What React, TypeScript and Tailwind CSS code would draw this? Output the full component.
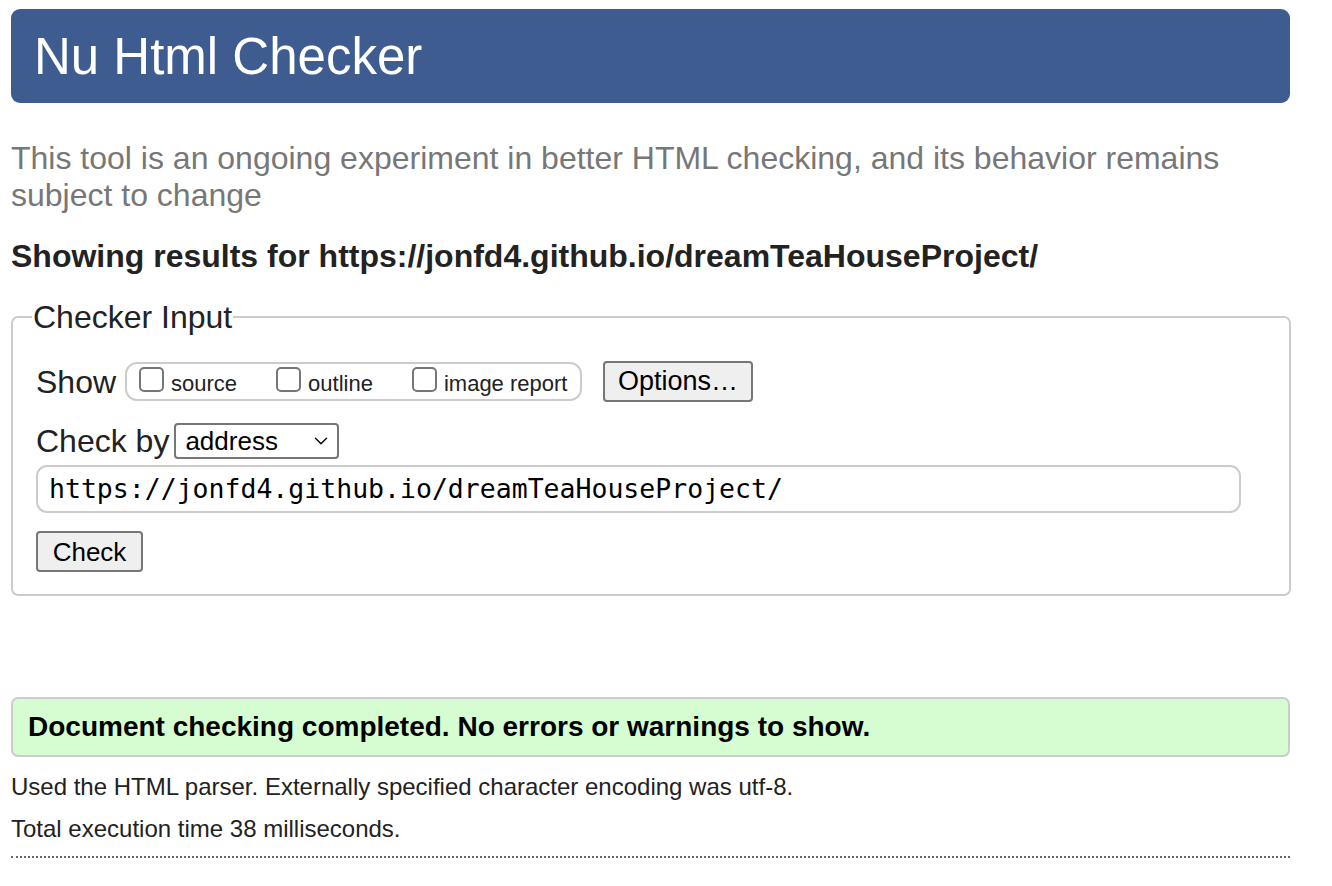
import { ChevronDown } from "lucide-react";

const sans = "font-['Liberation_Sans',Arial,sans-serif]";

function Box({ label }: { label: string }) {
  return (
    <label className="flex items-end gap-[7px]">
      <span className="h-[25px] w-[25px] rounded-[5px] border-2 border-[#767676] bg-white" />
      <span className="-mb-[3px] text-[22px] leading-none text-[#222]">{label}</span>
    </label>
  );
}

export default function App() {
  return (
    <div className={`${sans} min-h-[886px] w-[1332px] bg-white px-[11px] pt-[9px] text-[#222]`}>
      <header className="flex h-[94px] w-[1279px] items-center rounded-[9px] bg-[#3e5c90] pl-[23px]">
        <h1 className="text-[51px] leading-none text-white">Nu Html Checker</h1>
      </header>

      <p className="mt-[37px] w-[1279px] text-[32px] leading-[37px] text-[#777]">
        This tool is an ongoing experiment in better HTML checking, and its behavior remains
        subject to change
      </p>

      <h2 className="mt-[24px] text-[32px] font-bold leading-[37px] text-[#222]">
        Showing results for https://jonfd4.github.io/dreamTeaHouseProject/
      </h2>

      <fieldset className="mt-[26px] w-[1279px] rounded-[7px] border-2 border-[#ccc] pb-[22px] pl-[23px] pr-[48px]">
        <legend className="-ml-[4px] px-[1px] text-[32px] leading-[32px]">Checker Input</legend>

        <div className="mt-[28px] flex items-center">
          <span className="text-[32px] leading-none">Show</span>
          <div className="ml-[9px] flex h-[39px] w-[457px] items-center gap-[39px] rounded-[12px] border-2 border-[#ccc] pb-[4px] pl-[12px]">
            <Box label="source" />
            <Box label="outline" />
            <Box label="image report" />
          </div>
          <button className="ml-[21px] h-[41px] w-[150px] rounded-[4px] border-2 border-[#767676] bg-[#efefef] text-[27px] leading-none text-black">
            Options…
          </button>
        </div>

        <div className="mt-[21px] flex items-center">
          <span className="text-[32px] leading-none">Check by</span>
          <div className="ml-[5px] flex h-[36px] w-[165px] items-center justify-between rounded-[4px] border-2 border-[#767676] bg-white pl-[9px] pr-[5px]">
            <span className="text-[26px] leading-none text-black">address</span>
            <ChevronDown className="h-[22px] w-[22px] text-black" strokeWidth={1.5} />
          </div>
        </div>

        <div className="mt-[6px] flex h-[48px] w-[1205px] items-center rounded-[11px] border-2 border-[#ccc] pl-[11px] font-['DejaVu_Sans_Mono',monospace] text-[26.5px] text-black">
          https://jonfd4.github.io/dreamTeaHouseProject/
        </div>

        <button className="mt-[18px] h-[41px] w-[107px] rounded-[4px] border-2 border-[#767676] bg-[#efefef] text-[26px] leading-none text-black">
          Check
        </button>
      </fieldset>

      <div className="mt-[101px] flex h-[60px] w-[1279px] items-center rounded-[7px] border-2 border-[#ccc] bg-[#d6fcd1] pl-[15px]">
        <span className="text-[28px] font-bold leading-none text-black">
          Document checking completed. No errors or warnings to show.
        </span>
      </div>

      <p className="mt-[18px] text-[24px] leading-[24px]">
        Used the HTML parser. Externally specified character encoding was utf-8.
      </p>
      <p className="mt-[18px] text-[24px] leading-[24px]">Total execution time 38 milliseconds.</p>

      <div className="mt-[15px] w-[1279px] border-t-2 border-dotted border-[#666]" />
    </div>
  );
}
